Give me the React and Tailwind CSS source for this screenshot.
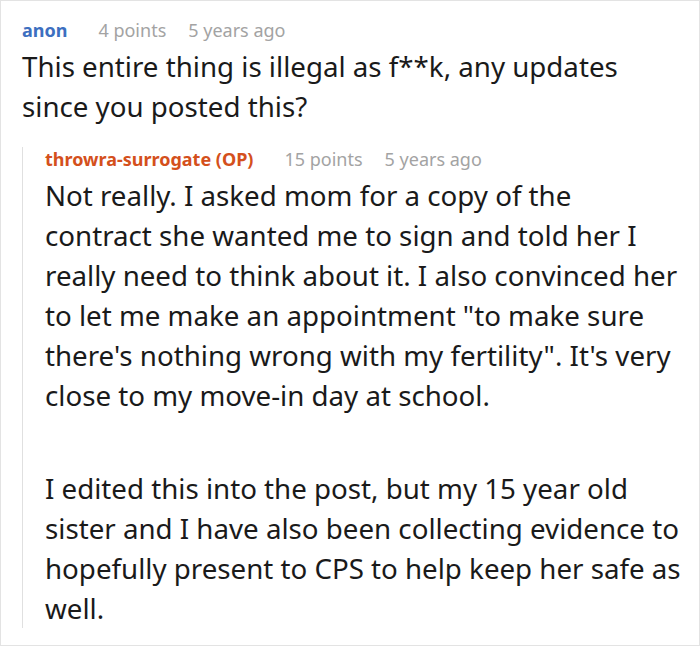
const font = { fontFamily: '"Noto Sans", "Open Sans", sans-serif' };

function Meta({ author, authorClass, points, age }) {
  return (
    <div className="flex items-baseline text-[18px] leading-[24px]">
      <span className={`font-bold mr-[31px] ${authorClass}`}>{author}</span>
      <span className="text-[#a3a3a3] mr-[22px]">{points}</span>
      <span className="text-[#a3a3a3]">{age}</span>
    </div>
  );
}

export default function App() {
  return (
    <div
      className="w-[700px] h-[646px] overflow-hidden border border-[#e3e3e3] bg-white text-[#1a1a1a]"
      style={font}
    >
      <div className="pl-[21px] pt-[17px] pr-[15px]">
        <Meta author="anon" authorClass="text-[#3d6fc0]" points="4 points" age="5 years ago" />
        <p className="mt-[4px] text-[27.7px] leading-[40px]">
          This entire thing is illegal as f**k, any updates since you posted this?
        </p>

        <div className="mt-[21px] border-l border-[#e0e0e0] pl-[22px]">
          <Meta
            author="throwra-surrogate (OP)"
            authorClass="text-[#d4501c]"
            points="15 points"
            age="5 years ago"
          />
          <p className="mt-[4px] text-[27.7px] leading-[40px]">
            Not really. I asked mom for a copy of the contract she wanted me to sign and told her I
            really need to think about it. I also convinced her to let me make an appointment "to
            make sure there's nothing wrong with my fertility". It's very close to my move-in day at
            school.
          </p>
          <p className="mt-[53px] text-[27.7px] leading-[40px]">
            I edited this into the post, but my 15 year old sister and I have also been collecting
            evidence to hopefully present to CPS to help keep her safe as well.
          </p>
        </div>
      </div>
    </div>
  );
}
